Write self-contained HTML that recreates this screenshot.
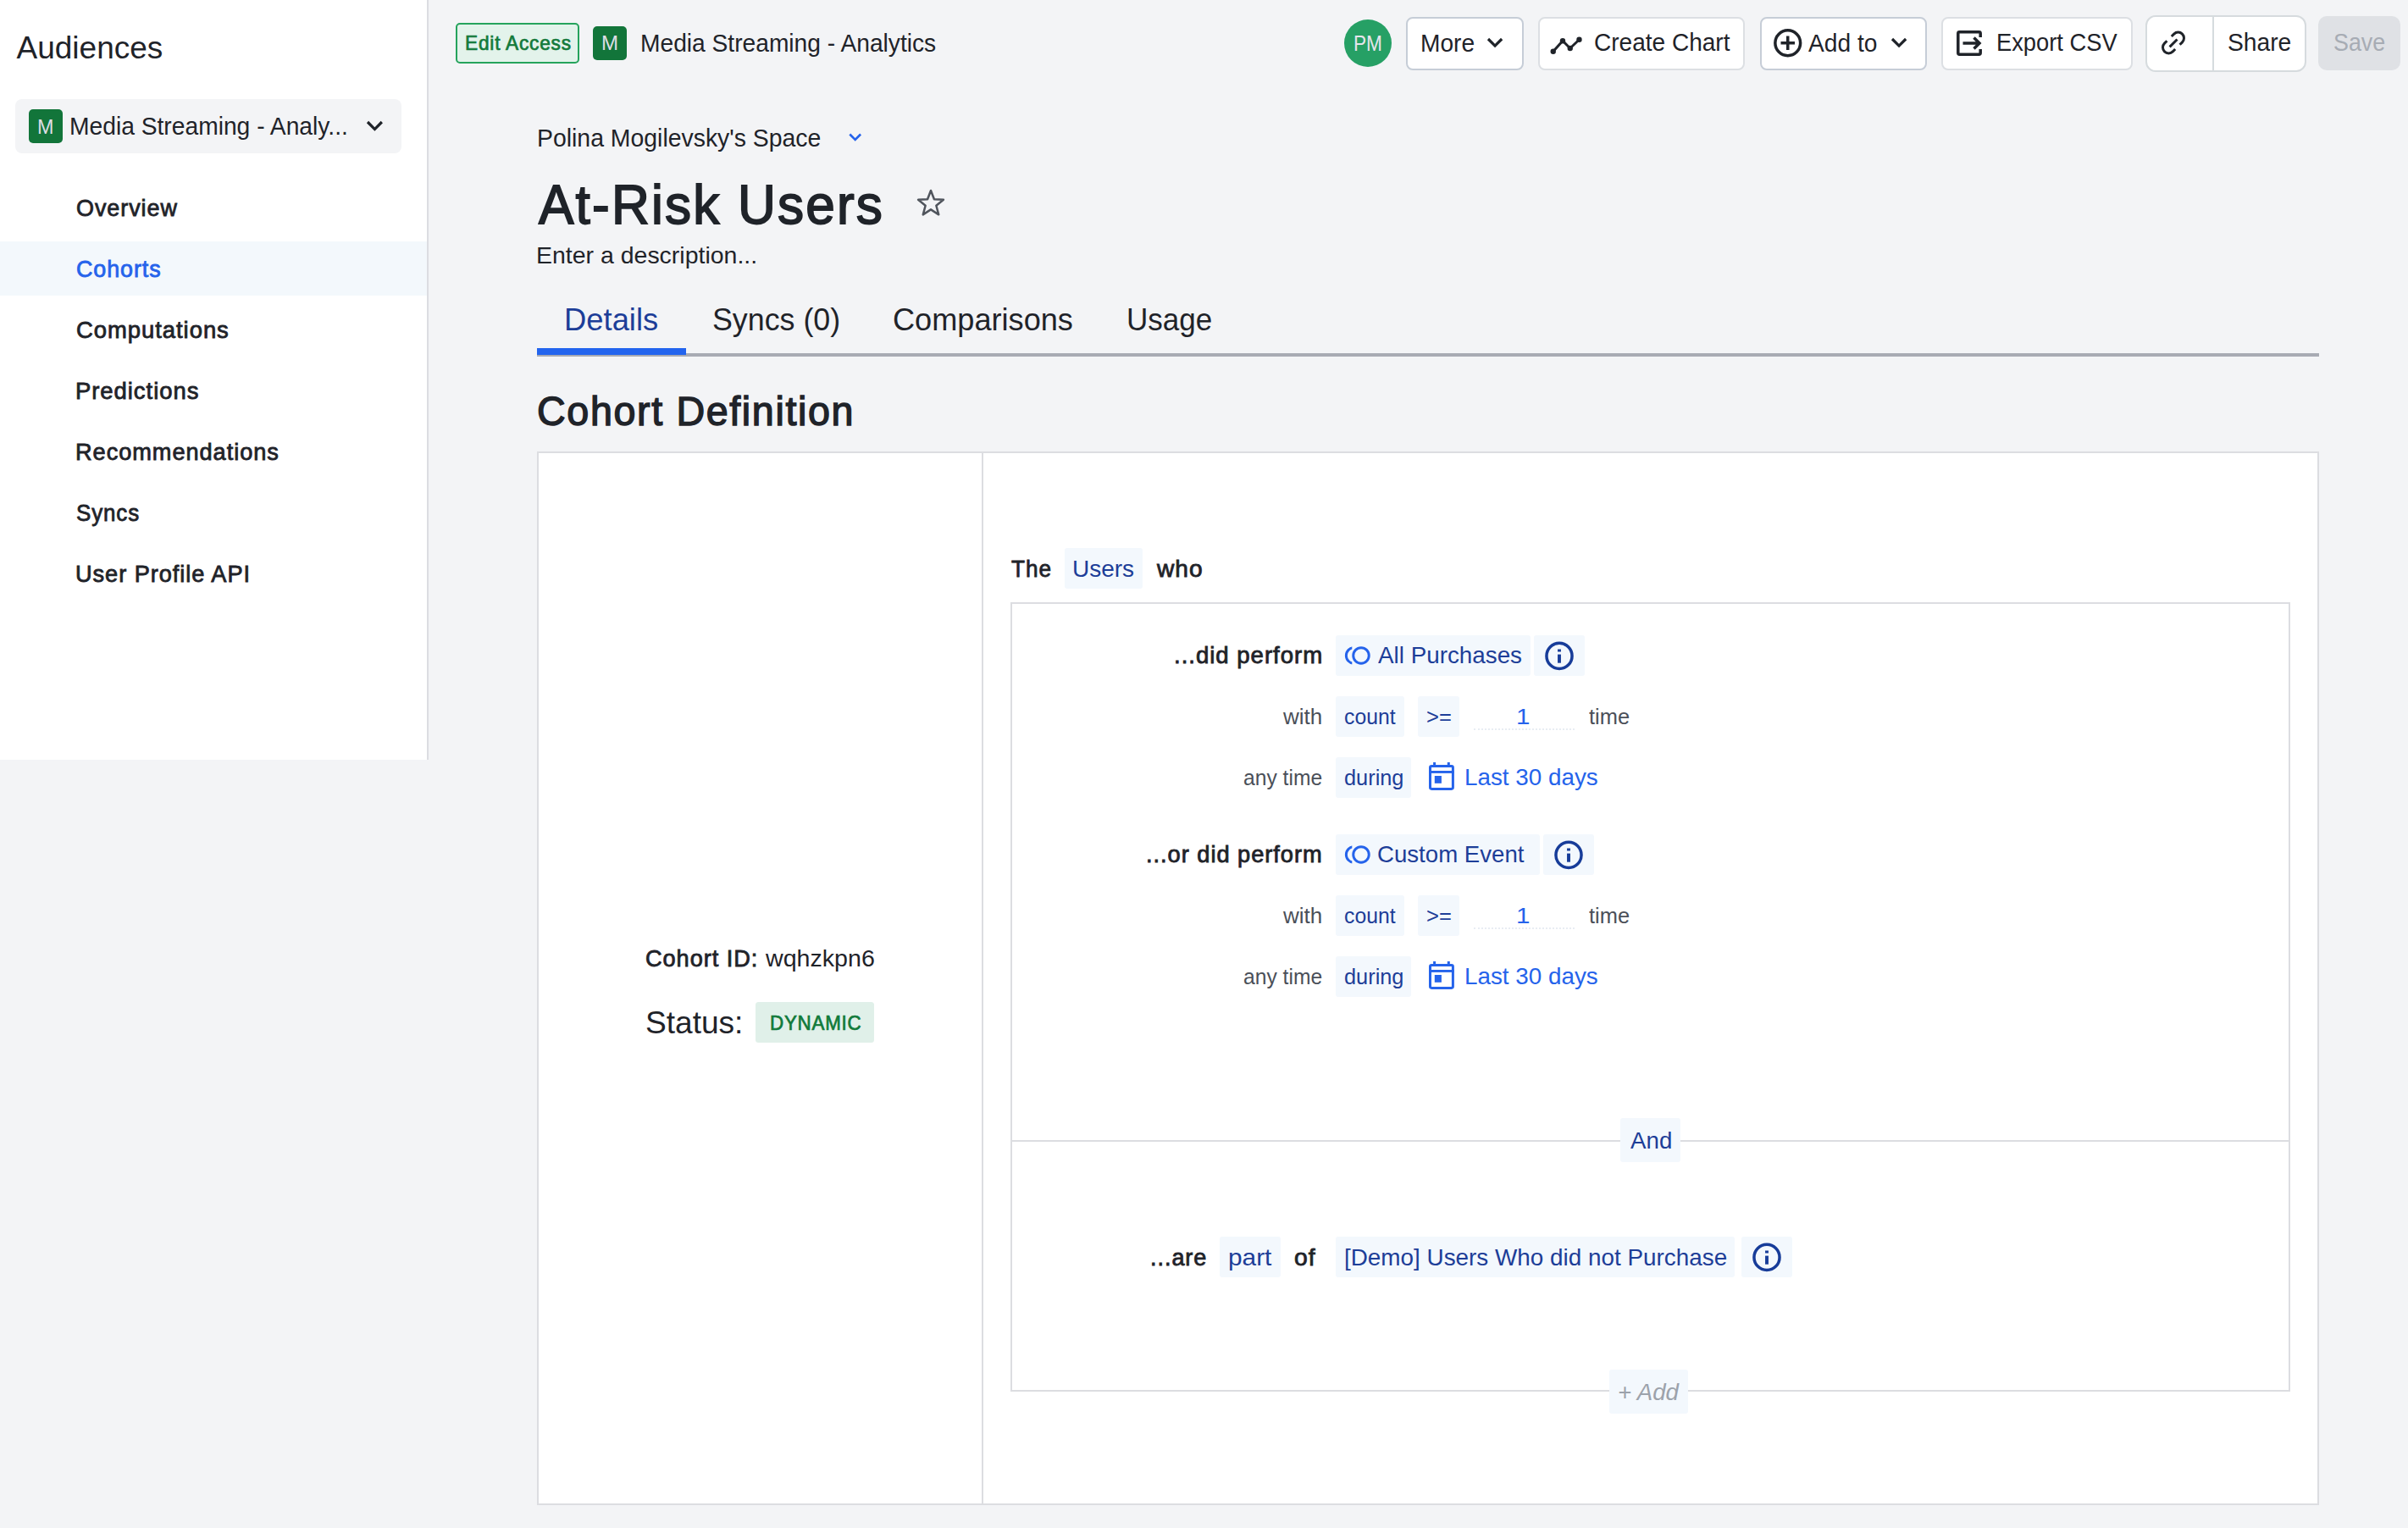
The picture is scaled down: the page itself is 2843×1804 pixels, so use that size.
<!DOCTYPE html>
<html><head><meta charset="utf-8"><style>
html,body{margin:0;padding:0;}
body{width:2843px;height:1804px;overflow:hidden;background:#F3F4F6;position:relative;font-family:'Liberation Sans', sans-serif;}
.t{position:absolute;white-space:pre;line-height:1;transform-origin:0 0;}
.b{position:absolute;box-sizing:border-box;}
svg{position:absolute;overflow:visible;}
</style></head><body>
<!-- sidebar -->
<div class=b style="left:0;top:0;width:506px;height:897px;background:#fff;border-right:2px solid #DCDDE2"></div>
<div class=b style="left:18px;top:117px;width:456px;height:64px;background:#F3F4F6;border-radius:8px"></div>
<div class=b style="left:34px;top:129px;width:40px;height:40px;background:#12753A;border-radius:5px"></div>
<svg style="left:430.03px;top:139.93px" width="25" height="19" viewBox="430.03 139.93 25 19"><polyline points="434.03,143.93 442.45,152.44 450.87,143.93" fill="none" stroke="#1F2329" stroke-width="3.2"/></svg>
<div class=b style="left:0;top:285px;width:504px;height:64px;background:#F3F8FC"></div>
<!-- top bar -->
<div class=b style="left:538px;top:27px;width:146px;height:48px;background:#E3F3EB;border:2px solid #25A35C;border-radius:5px"></div>
<div class=b style="left:700px;top:31px;width:40px;height:40px;background:#12753A;border-radius:5px"></div>
<div class=b style="left:1587px;top:23px;width:56px;height:56px;background:#26A065;border-radius:50%"></div>
<div class=b style="left:1659.5px;top:19.5px;width:139px;height:63px;background:#fff;border:2px solid #C6CDD7;border-radius:8px"></div>
<svg style="left:1753.33px;top:42.08px" width="24" height="18" viewBox="1753.33 42.08 24 18"><polyline points="1757.33,46.08 1765.4,54.14 1773.47,46.08" fill="none" stroke="#1F2329" stroke-width="3.2"/></svg>
<div class=b style="left:1816px;top:19.5px;width:244px;height:63px;background:#fff;border:2px solid #DCDFE3;border-radius:8px"></div>
<svg style="left:1830px;top:43px" width="38" height="22" viewBox="0 0 38 22"><polyline points="3.75,17.75 15,5.25 23.75,14 34.5,3.75" fill="none" stroke="#1F2329" stroke-width="3"/><circle cx="3.75" cy="17.75" r="3.2" fill="#1F2329"/><circle cx="15" cy="5.25" r="3.2" fill="#1F2329"/><circle cx="23.75" cy="14" r="3.2" fill="#1F2329"/><circle cx="34.5" cy="3.75" r="3.2" fill="#1F2329"/></svg>
<div class=b style="left:2077.5px;top:19.5px;width:197px;height:63px;background:#fff;border:2px solid #C6CDD7;border-radius:8px"></div>
<svg style="left:2094px;top:34px" width="34" height="34" viewBox="0 0 34 34"><circle cx="16.75" cy="16.75" r="14.9" fill="none" stroke="#1F2329" stroke-width="3.5"/><path d="M16.75 8.5V25M8.5 16.75H25" stroke="#1F2329" stroke-width="3.5"/></svg>
<svg style="left:2229.53px;top:42.08px" width="24" height="18" viewBox="2229.53 42.08 24 18"><polyline points="2233.53,46.08 2241.6,54.14 2249.67,46.08" fill="none" stroke="#1F2329" stroke-width="3.2"/></svg>
<div class=b style="left:2291.5px;top:19.5px;width:226px;height:63px;background:#fff;border:2px solid #DCDFE3;border-radius:8px"></div>
<svg style="left:2310px;top:36px" width="30" height="30" viewBox="0 0 30 30"><path d="M28.2 8V3.5Q28.2 1.8 26.5 1.8H3.5Q1.8 1.8 1.8 3.5V26.5Q1.8 28.2 3.5 28.2H26.5Q28.2 28.2 28.2 26.5V22" fill="none" stroke="#1F2329" stroke-width="3.5"/><path d="M7.5 15H27M20.5 8.5L27 15L20.5 21.5" fill="none" stroke="#1F2329" stroke-width="3.5"/></svg>
<div class=b style="left:2532.5px;top:17.5px;width:190px;height:67px;background:#fff;border:2px solid #D6DBDE;border-radius:12px"></div>
<div class=b style="left:2612px;top:19px;width:2px;height:64px;background:#D6DBDE"></div>
<svg style="left:2540px;top:28px" width="54" height="44" viewBox="2540 28 54 44"><path d="M2563.82 43.02L2566.72 40.12A6.9 6.9 0 0 1 2576.48 49.88L2573.58 52.78M2568.18 57.98L2565.28 60.88A6.9 6.9 0 0 1 2555.52 51.12L2558.42 48.22M2561.6 55.35L2570.5 46.45" fill="none" stroke="#1F2329" stroke-width="3"/></svg>
<div class=b style="left:2737px;top:19px;width:97px;height:64px;background:#DFE1E5;border-radius:10px"></div>
<!-- header -->
<svg style="left:1002px;top:157px" width="16" height="11" viewBox="0 0 16 11"><polyline points="1.3,1.5 7.7,8 14.1,1.5" fill="none" stroke="#2563EB" stroke-width="2.6"/></svg>
<svg style="left:1070px;top:212px" width="60" height="54" viewBox="1070 212 60 54"><polygon points="1099.00,224.95 1102.94,235.23 1113.93,235.80 1105.37,242.72 1108.23,253.35 1099.00,247.35 1089.77,253.35 1092.63,242.72 1084.07,235.80 1095.06,235.23" fill="none" stroke="#50555D" stroke-width="2.5" stroke-linejoin="round"/></svg>
<div class=b style="left:634px;top:417px;width:2104px;height:4px;background:#A8ABB3"></div>
<div class=b style="left:634px;top:411px;width:176px;height:8px;background:#2264EE"></div>
<!-- card -->
<div class=b style="left:634px;top:533px;width:2104px;height:1244px;background:#fff;border:2px solid #DCDDE1"></div>
<div class=b style="left:1159px;top:535px;width:2px;height:1240px;background:#DCDDE1"></div>
<div class=b style="left:892px;top:1183px;width:140px;height:48px;background:#E0F0E9;border-radius:3.5px"></div>
<div class=b style="left:1257px;top:647px;width:92px;height:48px;background:#F3F8FD;border-radius:3px"></div>
<div class=b style="left:1193px;top:711px;width:1511px;height:932px;border:2px solid #DCDDE1"></div>
<!-- group chips -->
<div class=b style="left:1577px;top:750px;width:230px;height:48px;background:#F3F8FD;border-radius:3px"></div>
<div class=b style="left:1811px;top:750px;width:60px;height:48px;background:#F3F8FD;border-radius:3px"></div>
<div class=b style="left:1577px;top:822px;width:81px;height:48px;background:#F3F8FD;border-radius:3px"></div>
<div class=b style="left:1674px;top:822px;width:49px;height:48px;background:#F3F8FD;border-radius:3px"></div>
<div class=b style="left:1739.5px;top:860px;width:119px;height:0;border-bottom:2px dotted #E8EDF3"></div>
<div class=b style="left:1577px;top:894px;width:89px;height:48px;background:#F3F8FD;border-radius:3px"></div>
<div class=b style="left:1577px;top:985px;width:240.5px;height:48px;background:#F3F8FD;border-radius:3px"></div>
<div class=b style="left:1822px;top:985px;width:60px;height:48px;background:#F3F8FD;border-radius:3px"></div>
<div class=b style="left:1577px;top:1057px;width:81px;height:48px;background:#F3F8FD;border-radius:3px"></div>
<div class=b style="left:1674px;top:1057px;width:49px;height:48px;background:#F3F8FD;border-radius:3px"></div>
<div class=b style="left:1739.5px;top:1095px;width:119px;height:0;border-bottom:2px dotted #E8EDF3"></div>
<div class=b style="left:1577px;top:1129px;width:89px;height:48px;background:#F3F8FD;border-radius:3px"></div>
<!-- and separator -->
<div class=b style="left:1195px;top:1346px;width:1507px;height:2px;background:#DCDDE1"></div>
<div class=b style="left:1913px;top:1320px;width:71px;height:52px;background:#F3F8FD;border-radius:3px"></div>
<div class=b style="left:1440px;top:1460px;width:72px;height:48px;background:#F3F8FD;border-radius:3px"></div>
<div class=b style="left:1577px;top:1460px;width:470.5px;height:48px;background:#F3F8FD;border-radius:3px"></div>
<div class=b style="left:2056px;top:1460px;width:60px;height:48px;background:#F3F8FD;border-radius:3px"></div>
<div class=b style="left:1900px;top:1617px;width:93px;height:52px;background:#F3F8FD;border-radius:3px"></div>
<!-- icons -->
<svg style="left:1580px;top:750px" width="50" height="50" viewBox="0 0 50 50"><defs><clipPath id="ec0"><rect x="0" y="0" width="16.3" height="50"/></clipPath></defs><circle cx="27" cy="23.9" r="9.25" fill="none" stroke="#2563EB" stroke-width="2.95"/><circle cx="18.6" cy="23.9" r="9.25" fill="none" stroke="#2563EB" stroke-width="2.95" clip-path="url(#ec0)"/></svg>
<svg style="left:1687px;top:900px" width="30" height="33" viewBox="0 0 30 33"><rect x="1.5" y="4.55" width="26.9" height="26.85" rx="1.8" fill="none" stroke="#2563EB" stroke-width="3"/><rect x="0.5" y="10" width="29" height="2.9" fill="#2563EB"/><rect x="5.1" y="0" width="3" height="5" fill="#2563EB"/><rect x="21.8" y="0" width="3" height="5" fill="#2563EB"/><rect x="6.8" y="16" width="8.1" height="8.8" fill="#2563EB"/></svg>
<svg style="left:1580px;top:985px" width="50" height="50" viewBox="0 0 50 50"><defs><clipPath id="ec1"><rect x="0" y="0" width="16.3" height="50"/></clipPath></defs><circle cx="27" cy="23.9" r="9.25" fill="none" stroke="#2563EB" stroke-width="2.95"/><circle cx="18.6" cy="23.9" r="9.25" fill="none" stroke="#2563EB" stroke-width="2.95" clip-path="url(#ec1)"/></svg>
<svg style="left:1687px;top:1135px" width="30" height="33" viewBox="0 0 30 33"><rect x="1.5" y="4.55" width="26.9" height="26.85" rx="1.8" fill="none" stroke="#2563EB" stroke-width="3"/><rect x="0.5" y="10" width="29" height="2.9" fill="#2563EB"/><rect x="5.1" y="0" width="3" height="5" fill="#2563EB"/><rect x="21.8" y="0" width="3" height="5" fill="#2563EB"/><rect x="6.8" y="16" width="8.1" height="8.8" fill="#2563EB"/></svg>
<svg style="left:1824px;top:757.5px" width="34" height="34" viewBox="0 0 34 34"><circle cx="17" cy="16.4" r="15.05" fill="none" stroke="#173C99" stroke-width="3.5"/><rect x="15.05" y="8.5" width="3.9" height="3" fill="#173C99"/><rect x="15.05" y="14.6" width="3.9" height="10.1" fill="#173C99"/></svg>
<svg style="left:1835.25px;top:992.5px" width="34" height="34" viewBox="0 0 34 34"><circle cx="17" cy="16.4" r="15.05" fill="none" stroke="#173C99" stroke-width="3.5"/><rect x="15.05" y="8.5" width="3.9" height="3" fill="#173C99"/><rect x="15.05" y="14.6" width="3.9" height="10.1" fill="#173C99"/></svg>
<svg style="left:2069px;top:1467.6px" width="34" height="34" viewBox="0 0 34 34"><circle cx="17" cy="16.4" r="15.05" fill="none" stroke="#173C99" stroke-width="3.5"/><rect x="15.05" y="8.5" width="3.9" height="3" fill="#173C99"/><rect x="15.05" y="14.6" width="3.9" height="10.1" fill="#173C99"/></svg>

<div class=t style="left:19.50px;top:37.75px;font-family:'Liberation Sans', sans-serif;font-size:37px;font-style:normal;letter-spacing:0px;font-weight:400;color:#1F2329;">Audiences</div>
<div class=t style="left:82.05px;top:134.80px;font-family:'Liberation Sans', sans-serif;font-size:29px;font-style:normal;letter-spacing:0px;font-weight:400;color:#1F2329;transform:scaleX(0.9731);">Media Streaming - Analy...</div>
<div class=t style="left:90.24px;top:232.00px;font-family:'Liberation Sans', sans-serif;font-size:28px;font-style:normal;letter-spacing:0.98px;font-weight:400;-webkit-text-stroke:0.84px #1F2329;color:#1F2329;transform:scaleX(0.9618);">Overview</div>
<div class=t style="left:90.24px;top:304.00px;font-family:'Liberation Sans', sans-serif;font-size:28px;font-style:normal;letter-spacing:0.98px;font-weight:400;-webkit-text-stroke:0.84px #2563EB;color:#2563EB;transform:scaleX(0.9592);">Cohorts</div>
<div class=t style="left:90.22px;top:376.00px;font-family:'Liberation Sans', sans-serif;font-size:28px;font-style:normal;letter-spacing:0.98px;font-weight:400;-webkit-text-stroke:0.84px #1F2329;color:#1F2329;transform:scaleX(0.9797);">Computations</div>
<div class=t style="left:89.24px;top:448.00px;font-family:'Liberation Sans', sans-serif;font-size:28px;font-style:normal;letter-spacing:0.98px;font-weight:400;-webkit-text-stroke:0.84px #1F2329;color:#1F2329;transform:scaleX(0.9801);">Predictions</div>
<div class=t style="left:89.26px;top:520.00px;font-family:'Liberation Sans', sans-serif;font-size:28px;font-style:normal;letter-spacing:0.98px;font-weight:400;-webkit-text-stroke:0.84px #1F2329;color:#1F2329;transform:scaleX(0.9706);">Recommendations</div>
<div class=t style="left:90.27px;top:592.00px;font-family:'Liberation Sans', sans-serif;font-size:28px;font-style:normal;letter-spacing:0.98px;font-weight:400;-webkit-text-stroke:0.84px #1F2329;color:#1F2329;transform:scaleX(0.9253);">Syncs</div>
<div class=t style="left:89.26px;top:664.00px;font-family:'Liberation Sans', sans-serif;font-size:28px;font-style:normal;letter-spacing:0.98px;font-weight:400;-webkit-text-stroke:0.84px #1F2329;color:#1F2329;transform:scaleX(0.9702);">User Profile API</div>
<div class=t style="left:43.99px;top:138.00px;font-family:'Liberation Sans', sans-serif;font-size:24.5px;font-style:normal;letter-spacing:0px;font-weight:400;color:#DDDEE5;transform:scaleX(0.9529);">M</div>
<div class=t style="left:548.66px;top:38.80px;font-family:'Liberation Sans', sans-serif;font-size:24px;font-style:normal;letter-spacing:0.84px;font-weight:400;-webkit-text-stroke:0.72px #137A3B;color:#137A3B;transform:scaleX(0.9443);">Edit Access</div>
<div class=t style="left:709.54px;top:38.70px;font-family:'Liberation Sans', sans-serif;font-size:24.5px;font-style:normal;letter-spacing:0px;font-weight:400;color:#DDDEE5;transform:scaleX(0.9824);">M</div>
<div class=t style="left:756.26px;top:36.90px;font-family:'Liberation Sans', sans-serif;font-size:29px;font-style:normal;letter-spacing:0px;font-weight:400;color:#1F2329;transform:scaleX(0.9714);">Media Streaming - Analytics</div>
<div class=t style="left:1598.12px;top:38.90px;font-family:'Liberation Sans', sans-serif;font-size:25.5px;font-style:normal;letter-spacing:0px;font-weight:400;color:#E6E5EC;transform:scaleX(0.8882);">PM</div>
<div class=t style="left:1676.96px;top:36.90px;font-family:'Liberation Sans', sans-serif;font-size:29px;font-style:normal;letter-spacing:0px;font-weight:400;color:#1F2329;transform:scaleX(0.9698);">More</div>
<div class=t style="left:1881.53px;top:36.00px;font-family:'Liberation Sans', sans-serif;font-size:29px;font-style:normal;letter-spacing:0px;font-weight:400;color:#1F2329;transform:scaleX(0.9667);">Create Chart</div>
<div class=t style="left:2135.20px;top:36.90px;font-family:'Liberation Sans', sans-serif;font-size:29px;font-style:normal;letter-spacing:0px;font-weight:400;color:#1F2329;transform:scaleX(0.9705);">Add to</div>
<div class=t style="left:2356.87px;top:36.00px;font-family:'Liberation Sans', sans-serif;font-size:29px;font-style:normal;letter-spacing:0px;font-weight:400;color:#1F2329;transform:scaleX(0.9417);">Export CSV</div>
<div class=t style="left:2630.03px;top:35.80px;font-family:'Liberation Sans', sans-serif;font-size:29px;font-style:normal;letter-spacing:0px;font-weight:400;color:#1F2329;transform:scaleX(0.9733);">Share</div>
<div class=t style="left:2754.77px;top:35.80px;font-family:'Liberation Sans', sans-serif;font-size:29px;font-style:normal;letter-spacing:0px;font-weight:400;color:#A7ACB4;transform:scaleX(0.9266);">Save</div>
<div class=t style="left:633.54px;top:148.50px;font-family:'Liberation Sans', sans-serif;font-size:29px;font-style:normal;letter-spacing:0px;font-weight:400;color:#1F2329;transform:scaleX(0.9794);">Polina Mogilevsky's Space</div>
<div class=t style="left:636.46px;top:209.00px;font-family:'Liberation Sans', sans-serif;font-size:65px;font-style:normal;letter-spacing:2.28px;font-weight:400;-webkit-text-stroke:1.80px #1F2329;color:#1F2329;transform:scaleX(0.9559);">At-Risk Users</div>
<div class=t style="left:633.47px;top:288.00px;font-family:'Liberation Sans', sans-serif;font-size:28px;font-style:normal;letter-spacing:0px;font-weight:400;color:#1F2329;transform:scaleX(1.0169);">Enter a description...</div>
<div class=t style="left:665.95px;top:358.80px;font-family:'Liberation Sans', sans-serif;font-size:37px;font-style:normal;letter-spacing:0px;font-weight:400;color:#1D3E98;transform:scaleX(0.9835);">Details</div>
<div class=t style="left:840.57px;top:358.80px;font-family:'Liberation Sans', sans-serif;font-size:37px;font-style:normal;letter-spacing:0px;font-weight:400;color:#1F2329;transform:scaleX(0.9671);">Syncs (0)</div>
<div class=t style="left:1054.30px;top:358.80px;font-family:'Liberation Sans', sans-serif;font-size:37px;font-style:normal;letter-spacing:0px;font-weight:400;color:#1F2329;transform:scaleX(0.9767);">Comparisons</div>
<div class=t style="left:1329.66px;top:358.80px;font-family:'Liberation Sans', sans-serif;font-size:37px;font-style:normal;letter-spacing:0px;font-weight:400;color:#1F2329;transform:scaleX(0.9466);">Usage</div>
<div class=t style="left:633.58px;top:461.10px;font-family:'Liberation Sans', sans-serif;font-size:48.5px;font-style:normal;letter-spacing:1.70px;font-weight:400;-webkit-text-stroke:1.45px #1F2329;color:#1F2329;transform:scaleX(0.9616);">Cohort Definition</div>
<div class=t style="left:761.93px;top:1117.90px;font-family:'Liberation Sans', sans-serif;font-size:28px;font-style:normal;letter-spacing:0.98px;font-weight:400;-webkit-text-stroke:0.84px #1F2329;color:#1F2329;transform:scaleX(0.9694);">Cohort ID:</div>
<div class=t style="left:904.00px;top:1117.90px;font-family:'Liberation Sans', sans-serif;font-size:28px;font-style:normal;letter-spacing:0px;font-weight:400;color:#1F2329;transform:scaleX(1.0216);">wqhzkpn6</div>
<div class=t style="left:761.74px;top:1189.80px;font-family:'Liberation Sans', sans-serif;font-size:36px;font-style:normal;letter-spacing:0px;font-weight:400;color:#1F2329;transform:scaleX(1.0299);">Status:</div>
<div class=t style="left:908.77px;top:1195.60px;font-family:'Liberation Sans', sans-serif;font-size:24px;font-style:normal;letter-spacing:0.84px;font-weight:400;-webkit-text-stroke:0.72px #117A3A;color:#117A3A;transform:scaleX(0.9307);">DYNAMIC</div>
<div class=t style="left:1193.75px;top:658.00px;font-family:'Liberation Sans', sans-serif;font-size:28px;font-style:normal;letter-spacing:0.98px;font-weight:400;-webkit-text-stroke:0.84px #1F2329;color:#1F2329;transform:scaleX(0.9350);">The</div>
<div class=t style="left:1266.00px;top:658.00px;font-family:'Liberation Sans', sans-serif;font-size:28px;font-style:normal;letter-spacing:0px;font-weight:400;color:#1D3E98;">Users</div>
<div class=t style="left:1365.50px;top:658.00px;font-family:'Liberation Sans', sans-serif;font-size:28px;font-style:normal;letter-spacing:0.98px;font-weight:400;-webkit-text-stroke:0.84px #1F2329;color:#1F2329;transform:scaleX(1.0047);">who</div>
<div class=t style="left:1385.53px;top:760.40px;font-family:'Liberation Sans', sans-serif;font-size:28px;font-style:normal;letter-spacing:0.98px;font-weight:400;-webkit-text-stroke:0.84px #1F2329;color:#1F2329;transform:scaleX(0.9856);">...did perform</div>
<div class=t style="left:1627.40px;top:760.40px;font-family:'Liberation Sans', sans-serif;font-size:28px;font-style:normal;letter-spacing:0px;font-weight:400;color:#1D3E98;transform:scaleX(0.9932);">All Purchases</div>
<div class=t style="left:1515.00px;top:833.00px;font-family:'Liberation Sans', sans-serif;font-size:26px;font-style:normal;letter-spacing:0px;font-weight:400;color:#4B5059;">with</div>
<div class=t style="left:1586.55px;top:833.00px;font-family:'Liberation Sans', sans-serif;font-size:26px;font-style:normal;letter-spacing:0px;font-weight:400;color:#1D3E98;transform:scaleX(0.9524);">count</div>
<div class=t style="left:1684.02px;top:833.00px;font-family:'Liberation Sans', sans-serif;font-size:26px;font-style:normal;letter-spacing:0px;font-weight:400;color:#1D3E98;transform:scaleX(0.9821);">&gt;=</div>
<div class=t style="left:1790.23px;top:833.00px;font-family:'Liberation Sans', sans-serif;font-size:26px;font-style:normal;letter-spacing:0px;font-weight:400;color:#2563EB;transform:scaleX(1.1364);">1</div>
<div class=t style="left:1875.50px;top:833.00px;font-family:'Liberation Sans', sans-serif;font-size:26px;font-style:normal;letter-spacing:0px;font-weight:400;color:#4B5059;transform:scaleX(0.9792);">time</div>
<div class=t style="left:1468.05px;top:905.00px;font-family:'Liberation Sans', sans-serif;font-size:26px;font-style:normal;letter-spacing:0px;font-weight:400;color:#4B5059;transform:scaleX(0.9479);">any time</div>
<div class=t style="left:1586.53px;top:905.00px;font-family:'Liberation Sans', sans-serif;font-size:26px;font-style:normal;letter-spacing:0px;font-weight:400;color:#1D3E98;transform:scaleX(0.9750);">during</div>
<div class=t style="left:1729.26px;top:904.00px;font-family:'Liberation Sans', sans-serif;font-size:28px;font-style:normal;letter-spacing:0px;font-weight:400;color:#2563EB;transform:scaleX(0.9936);">Last 30 days</div>
<div class=t style="left:1352.55px;top:995.40px;font-family:'Liberation Sans', sans-serif;font-size:28px;font-style:normal;letter-spacing:0.98px;font-weight:400;-webkit-text-stroke:0.84px #1F2329;color:#1F2329;transform:scaleX(0.9738);">...or did perform</div>
<div class=t style="left:1626.41px;top:995.40px;font-family:'Liberation Sans', sans-serif;font-size:28px;font-style:normal;letter-spacing:0px;font-weight:400;color:#1D3E98;transform:scaleX(0.9863);">Custom Event</div>
<div class=t style="left:1515.00px;top:1068.00px;font-family:'Liberation Sans', sans-serif;font-size:26px;font-style:normal;letter-spacing:0px;font-weight:400;color:#4B5059;">with</div>
<div class=t style="left:1586.55px;top:1068.00px;font-family:'Liberation Sans', sans-serif;font-size:26px;font-style:normal;letter-spacing:0px;font-weight:400;color:#1D3E98;transform:scaleX(0.9524);">count</div>
<div class=t style="left:1684.02px;top:1068.00px;font-family:'Liberation Sans', sans-serif;font-size:26px;font-style:normal;letter-spacing:0px;font-weight:400;color:#1D3E98;transform:scaleX(0.9821);">&gt;=</div>
<div class=t style="left:1790.23px;top:1068.00px;font-family:'Liberation Sans', sans-serif;font-size:26px;font-style:normal;letter-spacing:0px;font-weight:400;color:#2563EB;transform:scaleX(1.1364);">1</div>
<div class=t style="left:1875.50px;top:1068.00px;font-family:'Liberation Sans', sans-serif;font-size:26px;font-style:normal;letter-spacing:0px;font-weight:400;color:#4B5059;transform:scaleX(0.9792);">time</div>
<div class=t style="left:1468.05px;top:1140.00px;font-family:'Liberation Sans', sans-serif;font-size:26px;font-style:normal;letter-spacing:0px;font-weight:400;color:#4B5059;transform:scaleX(0.9479);">any time</div>
<div class=t style="left:1586.53px;top:1140.00px;font-family:'Liberation Sans', sans-serif;font-size:26px;font-style:normal;letter-spacing:0px;font-weight:400;color:#1D3E98;transform:scaleX(0.9750);">during</div>
<div class=t style="left:1729.26px;top:1139.00px;font-family:'Liberation Sans', sans-serif;font-size:28px;font-style:normal;letter-spacing:0px;font-weight:400;color:#2563EB;transform:scaleX(0.9936);">Last 30 days</div>
<div class=t style="left:1924.50px;top:1332.75px;font-family:'Liberation Sans', sans-serif;font-size:28px;font-style:normal;letter-spacing:0px;font-weight:400;color:#1D3E98;transform:scaleX(0.9896);">And</div>
<div class=t style="left:1358.07px;top:1470.75px;font-family:'Liberation Sans', sans-serif;font-size:28px;font-style:normal;letter-spacing:0.98px;font-weight:400;-webkit-text-stroke:0.84px #1F2329;color:#1F2329;transform:scaleX(0.9659);">...are</div>
<div class=t style="left:1449.87px;top:1470.75px;font-family:'Liberation Sans', sans-serif;font-size:28px;font-style:normal;letter-spacing:0px;font-weight:400;color:#1D3E98;transform:scaleX(1.0652);">part</div>
<div class=t style="left:1527.74px;top:1470.75px;font-family:'Liberation Sans', sans-serif;font-size:28px;font-style:normal;letter-spacing:0.98px;font-weight:400;-webkit-text-stroke:0.84px #1F2329;color:#1F2329;transform:scaleX(1.0104);">of</div>
<div class=t style="left:1586.76px;top:1470.75px;font-family:'Liberation Sans', sans-serif;font-size:28px;font-style:normal;letter-spacing:0px;font-weight:400;color:#1D3E98;transform:scaleX(0.9950);">[Demo] Users Who did not Purchase</div>
<div class=t style="left:1909.83px;top:1630.00px;font-family:'Liberation Sans', sans-serif;font-size:28px;font-style:italic;letter-spacing:0px;font-weight:400;color:#9CA2AB;transform:scaleX(0.9861);">+ Add</div>
</body></html>
